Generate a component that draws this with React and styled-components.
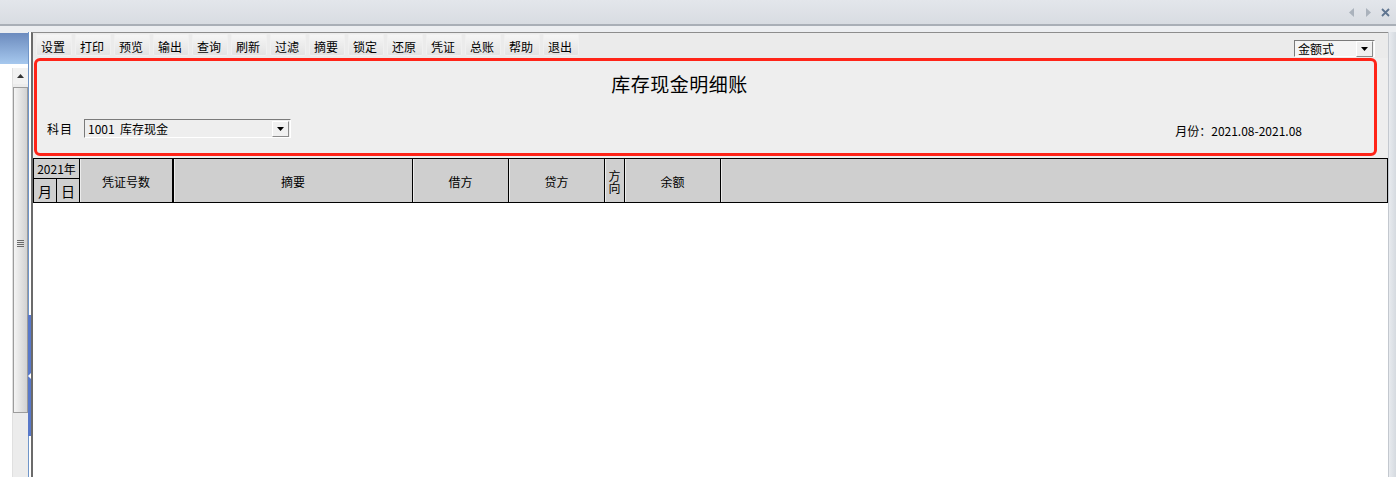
import React from "react";
import styled, { createGlobalStyle } from "styled-components";

const GlobalStyle = createGlobalStyle`
  html, body {
    margin: 0;
    padding: 0;
    width: 1396px;
    height: 477px;
    overflow: hidden;
    background: #eef0f2;
    font-family: "Noto Sans CJK SC", "Liberation Sans", sans-serif;
    font-size: 12px;
    color: #000;
  }
`;

const Screen = styled.div`
  width: 1396px;
  height: 477px;
  display: flex;
  flex-direction: column;
`;

const TopBar = styled.div`
  height: 24px;
  background: linear-gradient(#e3e6eb, #d8dce2);
  border-bottom: 2px solid #a9afb7;
  display: flex;
  justify-content: flex-end;
  align-items: center;
  padding-right: 6px;
  gap: 10px;
  flex-shrink: 0;
`;

const Body = styled.div`
  flex: 1;
  display: flex;
  padding-top: 6px;
  background: #eceef1;
  min-height: 0;
`;

const LeftPane = styled.div`
  width: 28px;
  display: flex;
  flex-direction: column;
  padding-top: 1px;
`;

const BlueHeader = styled.div`
  height: 31px;
  background: linear-gradient(#6c8bbe, #a6c8ee);
  flex-shrink: 0;
`;

const LeftWhite = styled.div`
  flex: 1;
  background: #fff;
  display: flex;
  padding: 4px 0 0 12px;
`;

const ScrollBar = styled.div`
  width: 16px;
  display: flex;
  flex-direction: column;
  background: #ececec;
  border-left: 1px solid #e0e0e0;
`;

const ScrollArrow = styled.div`
  height: 16px;
  display: flex;
  align-items: center;
  justify-content: center;
  background: #f2f2f2;
`;

const ScrollThumb = styled.div`
  height: 326px;
  margin-top: 3px;
  border: 1px solid #9c9c9c;
  background: linear-gradient(90deg, #f4f4f4, #d2d2d2);
  display: flex;
  align-items: center;
  justify-content: center;
  padding-bottom: 14px;
  box-sizing: border-box;
`;

const Grip = styled.div`
  width: 7px;
  height: 7px;
  background: repeating-linear-gradient(#6a6a6a 0 1px, transparent 1px 2px);
`;

const Splitter = styled.div`
  width: 2px;
  border-left: 1px solid #6f95c9;
  background: #fff;
  display: flex;
  flex-direction: column;
`;

const SplitGrip = styled.div`
  margin-top: 283px;
  margin-left: -1px;
  width: 3px;
  height: 121px;
  background: #5878c9;
  display: flex;
  align-items: center;
`;

const MainPane = styled.div`
  flex: 1;
  display: flex;
  flex-direction: column;
  border-left: 2px solid #6b6b6b;
  border-top: 1px solid #8d8d8d;
  background: #eeeeee;
  min-width: 0;
`;

const Toolbar = styled.div`
  height: 24px;
  display: flex;
  align-items: flex-start;
  padding: 1px 13px 0 3px;
  gap: 3px;
  background: #ebebeb;
  flex-shrink: 0;
`;

const ToolButton = styled.div`
  width: 36px;
  height: 22px;
  display: flex;
  align-items: center;
  justify-content: center;
  padding: 2px 2px 0 0;
  box-sizing: border-box;
  background: linear-gradient(#f6f6f6, #e2e2e2);
  border-radius: 2px;
  box-shadow: inset 0 0 0 1px #f0f0f0;
`;

const Spacer = styled.div`
  flex: 1;
`;

const Combo = styled.div`
  width: ${(p) => p.$w}px;
  height: ${(p) => p.$h}px;
  margin-top: ${(p) => p.$top || 0}px;
  display: flex;
  align-items: center;
  box-sizing: border-box;
  border-top: 1px solid #7a7a7a;
  border-left: 1px solid #7a7a7a;
  border-right: 1px solid #fff;
  border-bottom: 1px solid #fff;
  background: ${(p) => p.$bg || "#f3f3f3"};
  padding-left: 3px;
`;

const ComboText = styled.span`
  flex: 1;
  white-space: pre;
  line-height: 1;
`;

const ComboButton = styled.div`
  width: 15px;
  height: 14px;
  margin-right: 1px;
  display: flex;
  align-items: center;
  justify-content: center;
  background: #f0f0f0;
  border-right: 1px solid #8a8a8a;
  border-bottom: 1px solid #8a8a8a;
  border-top: 1px solid #fff;
  border-left: 1px solid #fff;
`;

const ReportBox = styled.div`
  height: 98px;
  margin: 0 11px 0 1px;
  border: 3px solid #ff2418;
  border-radius: 6px;
  background: #eeeeee;
  box-sizing: border-box;
  display: flex;
  flex-direction: column;
  flex-shrink: 0;
`;

const Title = styled.div`
  margin-top: 12px;
  padding-right: 52px;
  text-align: center;
  font-size: 19px;
  line-height: 22px;
  letter-spacing: 0.5px;
`;

const FilterRow = styled.div`
  margin-top: 24px;
  height: 19px;
  display: flex;
  align-items: center;
  padding: 0 72px 0 10px;
`;

const Label = styled.span`
  margin-right: 11px;
  letter-spacing: 1px;
`;

const Period = styled.span`
  margin-left: auto;
  padding-top: 4px;
  font-size: 12px;
`;

const HeaderGrid = styled.div`
  margin-top: 2px;
  height: 45px;
  display: flex;
  border-top: 1px solid #000;
  border-bottom: 1px solid #000;
  border-left: 1px solid #000;
  background: #cfcfcf;
  box-sizing: border-box;
  flex-shrink: 0;
`;

const HeadCell = styled.div`
  width: ${(p) => (p.$w ? `${p.$w}px` : "auto")};
  flex: ${(p) => (p.$w ? "none" : 1)};
  border-right: ${(p) => p.$bw || 1}px solid #000;
  box-shadow: inset 1px 0 0 #ececec;
  display: flex;
  align-items: center;
  justify-content: center;
  padding-top: 2px;
  box-sizing: content-box;
`;

const YearCell = styled.div`
  width: 45px;
  border-right: 1px solid #000;
  display: flex;
  flex-direction: column;
`;

const YearTop = styled.div`
  height: 19px;
  border-bottom: 1px solid #000;
  display: flex;
  align-items: center;
  justify-content: center;
`;

const YearBottom = styled.div`
  flex: 1;
  display: flex;
`;

const DayCell = styled.div`
  flex: 1;
  display: flex;
  align-items: center;
  justify-content: center;
  font-size: 14px;
  border-right: ${(p) => (p.$last ? "none" : "1px solid #000")};
`;

const Vertical = styled.div`
  width: 12px;
  font-size: 12px;
  line-height: 12px;
  text-align: center;
  word-break: break-all;
`;

const TableBody = styled.div`
  flex: 1;
  background: #fff;
`;

const RightStrip = styled.div`
  width: 7px;
  border-left: 1px solid #c3c8cf;
  background: linear-gradient(90deg, #e8ebef, #d5dae0);
`;

const Arrow = ({ dir }) => (
  <svg width="6" height="9" viewBox="0 0 6 9">
    <path d={dir === "l" ? "M5 0 L0 4.5 L5 9 Z" : "M1 0 L6 4.5 L1 9 Z"} fill="#aab2bc" />
  </svg>
);

const Close = () => (
  <svg width="9" height="9" viewBox="0 0 9 9">
    <path d="M1 1 L8 8 M8 1 L1 8" stroke="#5f7590" strokeWidth="1.8" />
  </svg>
);

const Down = () => (
  <svg width="7" height="4" viewBox="0 0 7 4">
    <path d="M0 0 H7 L3.5 4 Z" fill="#000" />
  </svg>
);

const tools = ["设置", "打印", "预览", "输出", "查询", "刷新", "过滤", "摘要", "锁定", "还原", "凭证", "总账", "帮助", "退出"];

const App = () => {
  return (
    <Screen>
      <GlobalStyle />
      <TopBar>
        <Arrow dir="l" />
        <Arrow dir="r" />
        <Close />
      </TopBar>
      <Body>
        <LeftPane>
          <BlueHeader />
          <LeftWhite>
            <ScrollBar>
              <ScrollArrow>
                <svg width="7" height="4" viewBox="0 0 7 4">
                  <path d="M0 4 H7 L3.5 0 Z" fill="#333" />
                </svg>
              </ScrollArrow>
              <ScrollThumb>
                <Grip />
              </ScrollThumb>
            </ScrollBar>
          </LeftWhite>
        </LeftPane>
        <Splitter>
          <SplitGrip>
            <svg width="3" height="6" viewBox="0 0 3 6">
              <path d="M3 0 L0 3 L3 6 Z" fill="#fff" />
            </svg>
          </SplitGrip>
        </Splitter>
        <MainPane>
          <Toolbar>
            {tools.map((t) => (
              <ToolButton key={t}>{t}</ToolButton>
            ))}
            <Spacer />
            <Combo $w={81} $h={17} $top={6} $bg="#f4f4f4">
              <ComboText>金额式</ComboText>
              <ComboButton>
                <Down />
              </ComboButton>
            </Combo>
          </Toolbar>
          <ReportBox>
            <Title>库存现金明细账</Title>
            <FilterRow>
              <Label>科目</Label>
              <Combo $w={207} $h={19} $bg="#eeeeee">
                <ComboText>{"1001  库存现金"}</ComboText>
                <ComboButton>
                  <Down />
                </ComboButton>
              </Combo>
              <Period>月份：2021.08-2021.08</Period>
            </FilterRow>
          </ReportBox>
          <HeaderGrid>
            <YearCell>
              <YearTop>2021年</YearTop>
              <YearBottom>
                <DayCell>月</DayCell>
                <DayCell $last>日</DayCell>
              </YearBottom>
            </YearCell>
            <HeadCell $w={92} $bw={2}>凭证号数</HeadCell>
            <HeadCell $w={238}>摘要</HeadCell>
            <HeadCell $w={95}>借方</HeadCell>
            <HeadCell $w={95}>贷方</HeadCell>
            <HeadCell $w={19}>
              <Vertical>方向</Vertical>
            </HeadCell>
            <HeadCell $w={95}>余额</HeadCell>
            <HeadCell />
          </HeaderGrid>
          <TableBody />
        </MainPane>
        <RightStrip />
      </Body>
    </Screen>
  );
};

export default App;
